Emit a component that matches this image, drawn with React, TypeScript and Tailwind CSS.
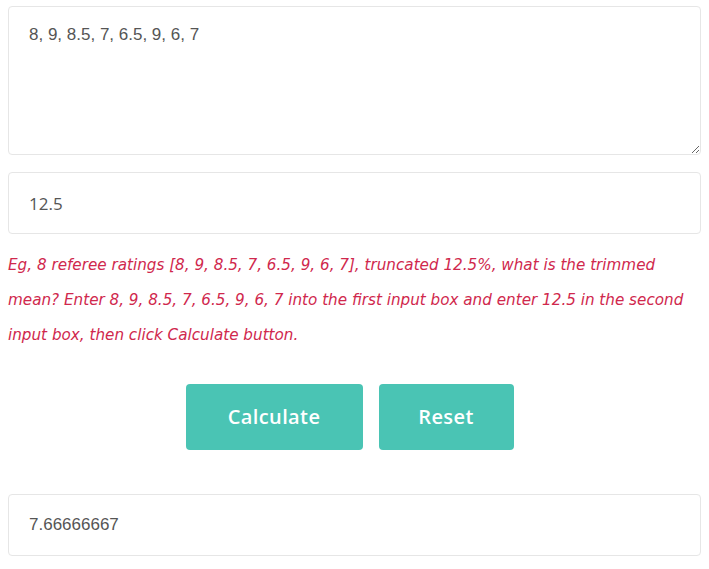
import {useState} from "react";

export default function App() {
    const [values, setValues] = useState("8, 9, 8.5, 7, 6.5, 9, 6, 7");
    const [percent, setPercent] = useState("12.5");
    const [result] = useState("7.66666667");

    return (
        <div className="min-h-screen bg-white px-2 pt-[6px] font-['Liberation_Sans',Arial,sans-serif]">
            <textarea
                className="block h-[149px] w-full rounded border border-[#e6e6e6] px-5 pt-[15px] text-[17px] leading-[1.5] text-[#555] outline-none"
                value={values}
                onChange={(e) => setValues(e.target.value)}
            />

            <input
                className="mt-[17px] block h-[62px] w-full rounded border border-[#e6e6e6] px-5 font-['Open_Sans',sans-serif] text-[17px] text-[#555] outline-none"
                value={percent}
                onChange={(e) => setPercent(e.target.value)}
            />

            <p className="mt-[14px] font-['DejaVu_Sans',sans-serif] text-[15.2px] italic leading-[35px] text-[#d0284d]">
                Eg, 8 referee ratings [8, 9, 8.5, 7, 6.5, 9, 6, 7], truncated 12.5%, what is the trimmed mean? Enter 8, 9,
                8.5, 7, 6.5, 9, 6, 7 into the first input box and enter 12.5 in the second input box, then click Calculate
                button.
            </p>

            <div className="mt-[31px] flex justify-center gap-4 pr-[10px]">
                <button className="h-[66px] w-[177px] rounded bg-[#4ac4b4] font-['Open_Sans',sans-serif] text-[20px] font-semibold tracking-[0.02em] text-white">
                    Calculate
                </button>
                <button className="h-[66px] w-[135px] rounded bg-[#4ac4b4] font-['Open_Sans',sans-serif] text-[20px] font-semibold tracking-[0.02em] text-white">
                    Reset
                </button>
            </div>

            <div className="mt-[44px] flex h-[62px] w-full items-center rounded border border-[#e6e6e6] px-5 text-[17px] text-[#555]">
                {result}
            </div>
        </div>
    );
}
